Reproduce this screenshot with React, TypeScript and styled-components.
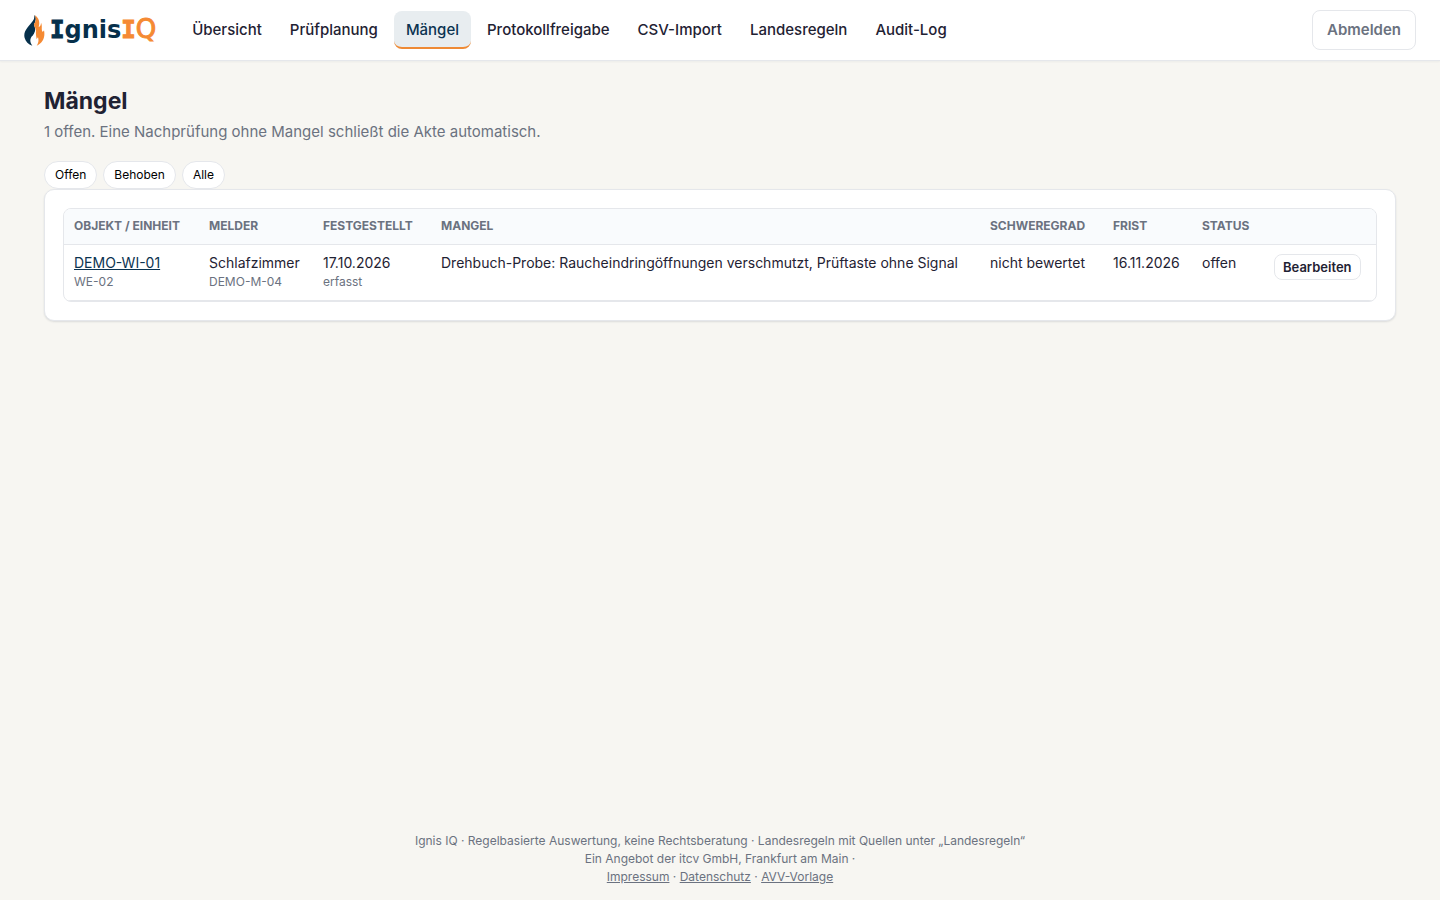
import React from "react";
import styled, { createGlobalStyle } from "styled-components";

const color = {
  paper: "#f7f6f2",
  ink: "#1f2233",
  muted: "#6b7280",
  line: "#e5e7eb",
  navy: "#0b3350",
  orange: "#ee8a35",
};

const GlobalStyle = createGlobalStyle`
  *, *::before, *::after { box-sizing: border-box; }
  body {
    margin: 0;
    background: ${color.paper};
    color: ${color.ink};
    font-family: Inter, "Liberation Sans", sans-serif;
    font-size: 15px;
    line-height: 22px;
  }
`;

const Page = styled.div`
  min-height: 100vh;
  display: flex;
  flex-direction: column;
`;

const TopBar = styled.header`
  display: flex;
  align-items: center;
  gap: 24px;
  padding: 10px 24px;
  background: #fff;
  border-bottom: 1px solid ${color.line};
  box-shadow: 0 1px 2px rgba(20, 30, 50, 0.05);
`;

const Brand = styled.a`
  display: flex;
  align-items: center;
  gap: 5px;
  color: #06304b;
  text-decoration: none;
`;

const Flame = styled.svg`
  display: block;
  width: 21px;
  height: 31px;
`;

const Wordmark = styled.span`
  font: bold 24px/30px "DejaVu Sans", sans-serif;
  padding-bottom: 2px;
`;

const SlabLetter = styled.span<{ $accent?: boolean }>`
  font-family: "DejaVu Sans Mono", monospace;
  color: ${(p) => (p.$accent ? "#f58a33" : "inherit")};
  -webkit-text-stroke: 1px currentColor;
`;

const ThinLetter = styled.span`
  color: #f58a33;
  font-size: 26px;
  font-weight: 400;
  -webkit-text-stroke: 1px currentColor;
`;

const Nav = styled.nav`
  display: flex;
  flex: 1;
  gap: 4px;
`;

const NavLink = styled.a<{ $active?: boolean }>`
  padding: 8px 12px 6px;
  border-bottom: 2px solid ${(p) => (p.$active ? color.orange : "transparent")};
  border-radius: 8px;
  background: ${(p) => (p.$active ? "#e8edf0" : "transparent")};
  color: ${(p) => (p.$active ? color.navy : color.ink)};
  font-weight: 500;
  text-decoration: none;
`;

const LogoutButton = styled.button`
  padding: 8px 14px;
  border: 1px solid ${color.line};
  border-radius: 8px;
  background: #fff;
  color: ${color.muted};
  font: 600 15px/22px Inter, sans-serif;
`;

const Main = styled.main`
  flex: 1;
  padding: 24px 44px;
`;

const Title = styled.h1`
  margin: 0;
  font-size: 23px;
  font-weight: 700;
  line-height: 32px;
`;

const Lead = styled.p`
  margin: 4px 0 18px;
  color: ${color.muted};
`;

const Filters = styled.div`
  display: flex;
  gap: 6px;
`;

const FilterPill = styled.button`
  padding: 4px 10px;
  border: 1px solid ${color.line};
  border-radius: 14px;
  background: #fff;
  color: #000;
  font: 400 12px/18px Inter, sans-serif;
`;

const Card = styled.section`
  padding: 18px;
  border: 1px solid ${color.line};
  border-radius: 10px;
  background: #fff;
  box-shadow: 0 1px 2px rgba(20, 30, 50, 0.12);
`;

const TableFrame = styled.div`
  overflow: hidden;
  border: 1px solid ${color.line};
  border-radius: 8px;
`;

const Table = styled.table`
  width: 100%;
  border-collapse: collapse;
  table-layout: fixed;
  font-size: 14px;
  line-height: 20px;
`;

const Col = styled.col<{ $width?: number }>`
  width: ${(p) => (p.$width ? `${p.$width}px` : "auto")};
`;

const HeadCell = styled.th`
  padding: 7px 10px 8px;
  border-bottom: 1px solid ${color.line};
  background: #f9fbfd;
  color: ${color.muted};
  font-size: 12px;
  font-weight: 700;
  text-align: left;
  text-transform: uppercase;
  white-space: nowrap;
`;

const Cell = styled.td`
  padding: 8px 10px 9px;
  border-bottom: 1px solid ${color.line};
  vertical-align: top;
`;

const ObjectLink = styled.a`
  color: ${color.navy};
`;

const Sub = styled.div`
  color: ${color.muted};
  font-size: 12px;
  line-height: 18px;
`;

const RowButton = styled.button`
  display: block;
  margin-top: 1px;
  padding: 2px 8px;
  border: 1px solid ${color.line};
  border-radius: 8px;
  background: #fff;
  color: ${color.ink};
  font: 600 13px/20px Inter, sans-serif;
`;

const Footer = styled.footer`
  padding: 14px 24px;
  color: ${color.muted};
  font-size: 12px;
  line-height: 18px;
  text-align: center;
`;

const FooterLink = styled.a`
  color: inherit;
`;

const navItems = [
  "Übersicht",
  "Prüfplanung",
  "Mängel",
  "Protokollfreigabe",
  "CSV-Import",
  "Landesregeln",
  "Audit-Log",
];

const columns: { label: string; width?: number }[] = [
  { label: "Objekt / Einheit", width: 135 },
  { label: "Melder", width: 114 },
  { label: "Festgestellt", width: 118 },
  { label: "Mangel" },
  { label: "Schweregrad", width: 123 },
  { label: "Frist", width: 89 },
  { label: "Status", width: 72 },
  { label: "", width: 112 },
];

const defects = [
  {
    object: "DEMO-WI-01",
    unit: "WE-02",
    room: "Schlafzimmer",
    detector: "DEMO-M-04",
    found: "17.10.2026",
    source: "erfasst",
    text: "Drehbuch-Probe: Raucheindringöffnungen verschmutzt, Prüftaste ohne Signal",
    severity: "nicht bewertet",
    due: "16.11.2026",
    status: "offen",
  },
];

export default function App() {
  return (
    <Page>
      <GlobalStyle />
      <TopBar>
        <Brand href="#" aria-label="IgnisIQ">
          <Flame viewBox="0 0 63 93" aria-hidden="true">
            <path
              fill="#06304b"
              d="M32 0C34 14 20 24 10 38C2 48-1 59 2 69C5 80 13 88 25 92C16 80 18 70 25 62C30 56 33 48 32 40C29 43 27 46 26 50C21 41 24 32 29 25C34 17 36 8 32 0Z"
            />
            <path
              fill="#06304b"
              d="M32 0C37 9 36 18 30 28C30 36 37 40 32 50C30 56 27 60 24 63C16 60 14 46 20 36C26 24 32 14 32 0Z"
            />
            <path
              fill="#f58a33"
              d="M32 0C46 9 48 22 44 36C49 34 51 29 51 23C56 34 51 41 55 50C58 50 59 48 60 46C64 65 58 82 38 92C43 84 45 76 42 67C40 69 39 71 38 73C37 64 35 58 36 50C37 40 30 36 30 28C36 18 37 9 32 0Z"
            />
          </Flame>
          <Wordmark>
            <SlabLetter>I</SlabLetter>gnis<SlabLetter $accent>I</SlabLetter>
            <ThinLetter>Q</ThinLetter>
          </Wordmark>
        </Brand>
        <Nav>
          {navItems.map((item) => (
            <NavLink key={item} href="#" $active={item === "Mängel"}>
              {item}
            </NavLink>
          ))}
        </Nav>
        <LogoutButton type="button">Abmelden</LogoutButton>
      </TopBar>

      <Main>
        <Title>Mängel</Title>
        <Lead>1 offen. Eine Nachprüfung ohne Mangel schließt die Akte automatisch.</Lead>
        <Filters>
          <FilterPill type="button">Offen</FilterPill>
          <FilterPill type="button">Behoben</FilterPill>
          <FilterPill type="button">Alle</FilterPill>
        </Filters>
        <Card>
          <TableFrame>
            <Table>
              <colgroup>
                {columns.map((c) => (
                  <Col key={c.label} $width={c.width} />
                ))}
              </colgroup>
              <thead>
                <tr>
                  {columns.map((c) => (
                    <HeadCell key={c.label} scope="col">
                      {c.label}
                    </HeadCell>
                  ))}
                </tr>
              </thead>
              <tbody>
                {defects.map((d) => (
                  <tr key={d.detector}>
                    <Cell>
                      <ObjectLink href="#">{d.object}</ObjectLink>
                      <Sub>{d.unit}</Sub>
                    </Cell>
                    <Cell>
                      {d.room}
                      <Sub>{d.detector}</Sub>
                    </Cell>
                    <Cell>
                      {d.found}
                      <Sub>{d.source}</Sub>
                    </Cell>
                    <Cell>{d.text}</Cell>
                    <Cell>{d.severity}</Cell>
                    <Cell>{d.due}</Cell>
                    <Cell>{d.status}</Cell>
                    <Cell>
                      <RowButton type="button">Bearbeiten</RowButton>
                    </Cell>
                  </tr>
                ))}
              </tbody>
            </Table>
          </TableFrame>
        </Card>
      </Main>

      <Footer>
        Ignis IQ · Regelbasierte Auswertung, keine Rechtsberatung · Landesregeln mit Quellen unter
        „Landesregeln“
        <br />
        Ein Angebot der itcv GmbH, Frankfurt am Main ·
        <br />
        <FooterLink href="#">Impressum</FooterLink> · <FooterLink href="#">Datenschutz</FooterLink> ·{" "}
        <FooterLink href="#">AVV-Vorlage</FooterLink>
      </Footer>
    </Page>
  );
}
